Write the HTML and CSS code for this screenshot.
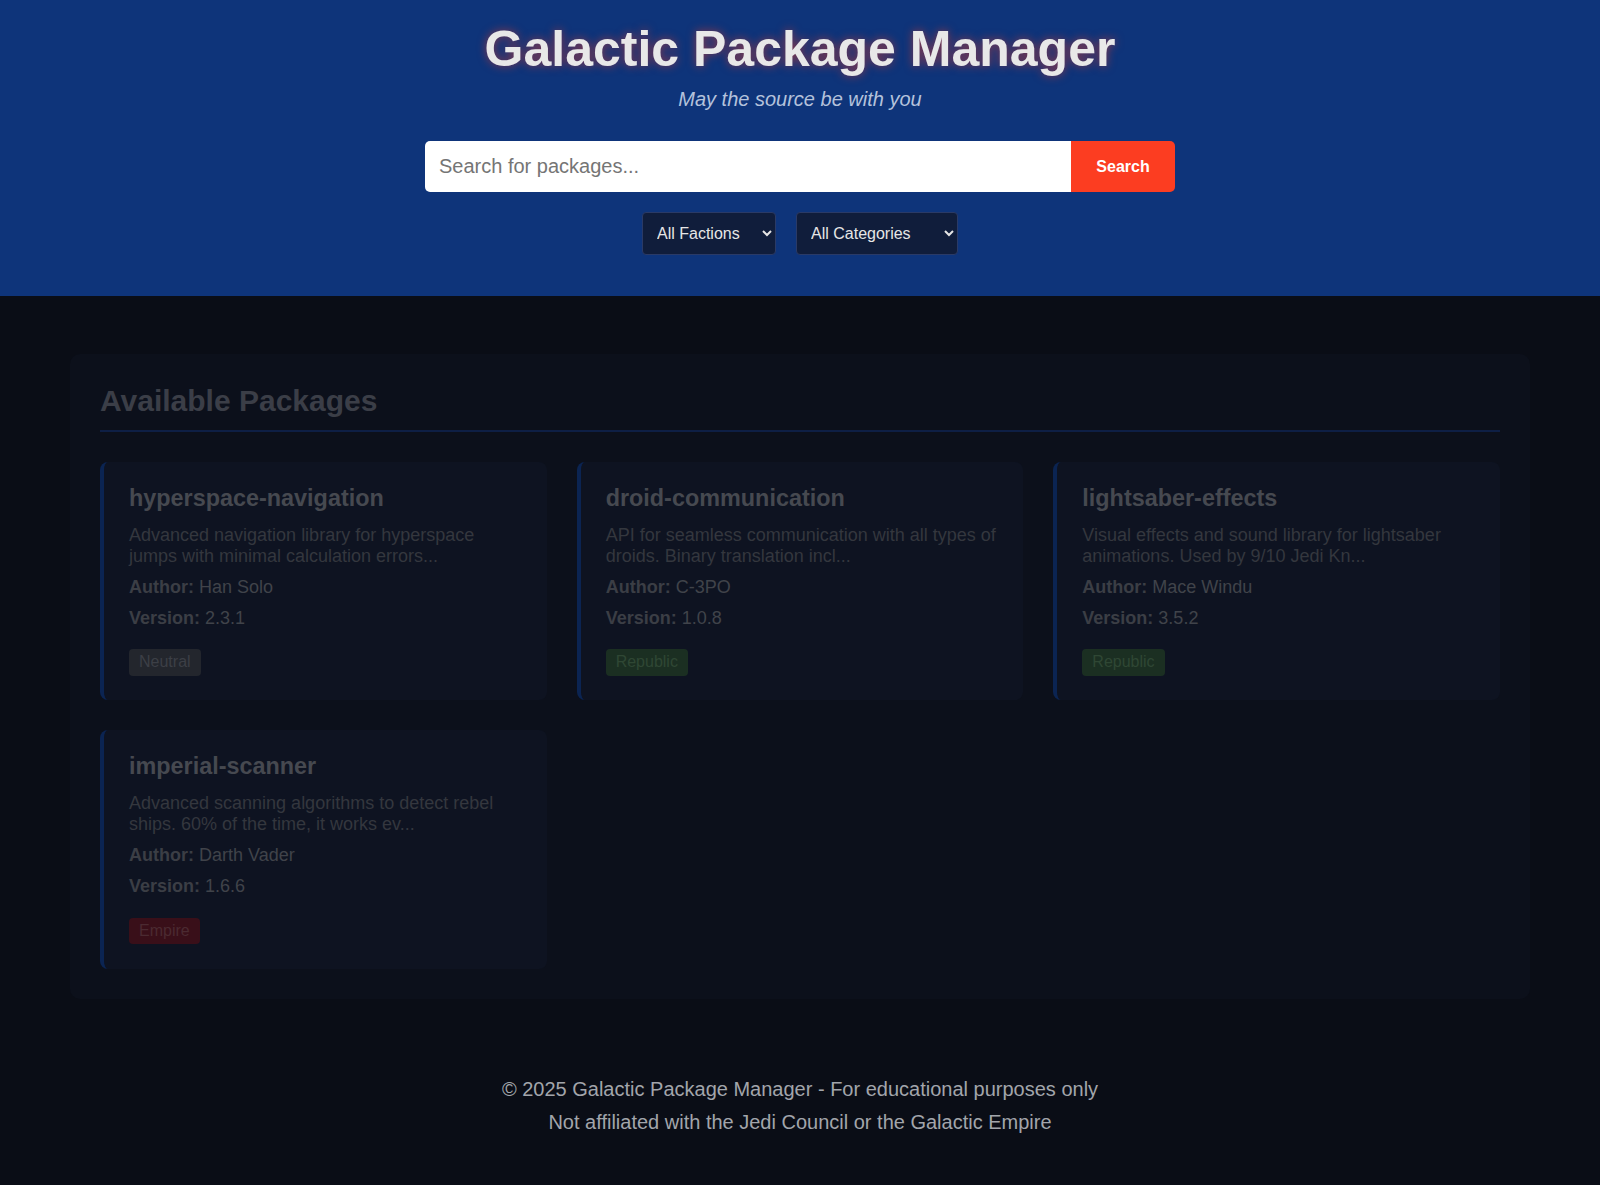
FILE: index.html
```html
<!DOCTYPE html>
<html lang="en">
<head>
<meta charset="utf-8">
<title>Galactic Package Manager</title>
<link rel="stylesheet" href="styles.css">
</head>
<body>
<header class="site-header">
  <h1 class="site-title">Galactic Package Manager</h1>
  <p class="tagline">May the source be with you</p>
  <form class="search-form">
    <input class="search-input" type="text" placeholder="Search for packages...">
    <button class="search-button" type="button">Search</button>
  </form>
  <div class="filters">
    <select class="filter filter-faction">
      <option>All Factions</option>
    </select>
    <select class="filter filter-category">
      <option>All Categories</option>
    </select>
  </div>
</header>

<main class="packages">
  <h2 class="section-title">Available Packages</h2>
  <div class="package-grid">
    <article class="card">
      <h3 class="card-title">hyperspace-navigation</h3>
      <p class="card-desc">Advanced navigation library for hyperspace jumps with minimal calculation errors...</p>
      <p class="card-meta"><strong>Author:</strong> Han Solo</p>
      <p class="card-meta"><strong>Version:</strong> 2.3.1</p>
      <div class="card-tags"><span class="badge badge-neutral">Neutral</span></div>
    </article>
    <article class="card">
      <h3 class="card-title">droid-communication</h3>
      <p class="card-desc">API for seamless communication with all types of droids. Binary translation incl...</p>
      <p class="card-meta"><strong>Author:</strong> C-3PO</p>
      <p class="card-meta"><strong>Version:</strong> 1.0.8</p>
      <div class="card-tags"><span class="badge badge-republic">Republic</span></div>
    </article>
    <article class="card">
      <h3 class="card-title">lightsaber-effects</h3>
      <p class="card-desc">Visual effects and sound library for lightsaber animations. Used by 9/10 Jedi Kn...</p>
      <p class="card-meta"><strong>Author:</strong> Mace Windu</p>
      <p class="card-meta"><strong>Version:</strong> 3.5.2</p>
      <div class="card-tags"><span class="badge badge-republic">Republic</span></div>
    </article>
    <article class="card">
      <h3 class="card-title">imperial-scanner</h3>
      <p class="card-desc">Advanced scanning algorithms to detect rebel ships. 60% of the time, it works ev...</p>
      <p class="card-meta"><strong>Author:</strong> Darth Vader</p>
      <p class="card-meta"><strong>Version:</strong> 1.6.6</p>
      <div class="card-tags"><span class="badge badge-empire">Empire</span></div>
    </article>
  </div>
</main>

<footer class="site-footer">
  <p>© 2025 Galactic Package Manager - For educational purposes only</p>
  <p>Not affiliated with the Jedi Council or the Galactic Empire</p>
</footer>
</body>
</html>
```

FILE: styles.css
```css
* { box-sizing: border-box; }

body {
  margin: 0;
  background: #0a0d16;
  color: #e6e6e6;
  font-family: "Liberation Sans", Arial, sans-serif;
  font-size: 18px;
}

.site-header {
  background: #0e347a;
  text-align: center;
  padding: 20px 20px 41px;
}

.site-title {
  margin: 0;
  font-size: 50px;
  font-weight: bold;
  line-height: normal;
  color: #e8e8e8;
  text-shadow: 0 0 10px rgba(252, 61, 33, 0.55);
}

.tagline {
  margin: 10px 0 0;
  font-size: 20px;
  font-style: italic;
  color: #b4c2dc;
}

.search-form {
  display: flex;
  width: 750px;
  margin: 30px auto 0;
  height: 51px;
}

.search-input {
  flex: 1;
  min-width: 0;
  height: 51px;
  border: none;
  border-radius: 5px 0 0 5px;
  padding: 0 14px;
  font-family: "Liberation Sans", Arial, sans-serif;
  font-size: 20px;
  color: #222;
  background: #fff;
  outline: none;
}

.search-input::placeholder { color: #757575; }

.search-button {
  width: 104px;
  height: 51px;
  border: none;
  border-radius: 0 5px 5px 0;
  background: #fc3d21;
  color: #fff;
  font-family: "Liberation Sans", Arial, sans-serif;
  font-size: 16px;
  font-weight: bold;
}

.filters {
  display: flex;
  justify-content: center;
  gap: 20px;
  margin-top: 20px;
}

.filter {
  height: 43px;
  padding: 0 6px 0 10px;
  background: #101d3b;
  color: #e6e6e6;
  border: 1px solid #2a3a66;
  border-radius: 4px;
  font-family: "Liberation Sans", Arial, sans-serif;
  font-size: 16px;
}

.filter-faction { width: 134px; }
.filter-category { width: 162px; }

.packages {
  max-width: 1460px;
  margin: 58px auto 0;
  padding: 30px;
  background: #0c101b;
  border-radius: 10px;
}

.section-title {
  margin: 0;
  padding-bottom: 12px;
  font-size: 30px;
  font-weight: bold;
  color: #3b3e47;
  border-bottom: 2px solid #0e1f45;
}

.package-grid {
  display: grid;
  grid-template-columns: repeat(3, 1fr);
  gap: 30px;
  margin-top: 30px;
}

.card {
  background: #0e1321;
  border-left: 4px solid #0b2452;
  border-radius: 8px;
  padding: 23px 25px 24.5px;
}

.card-title {
  margin: 0 0 12.5px;
  font-size: 23.4px;
  font-weight: bold;
  line-height: normal;
  color: #464950;
}

.card-desc {
  margin: 0 0 9.5px;
  line-height: 1.2;
  color: #34373e;
}

.card-meta {
  margin: 0 0 9px;
  line-height: 1.2;
  color: #40434a;
}

.card-meta strong { color: #3b3e45; }

.card-tags { margin-top: 20px; line-height: 1; }

.badge {
  display: inline-block;
  padding: 4px 10px;
  border-radius: 4px;
  font-size: 16px;
  line-height: 18.4px;
}

.badge-neutral { background: #23262d; color: #3c3f46; }
.badge-republic { background: #1b2f22; color: #2f4734; }
.badge-empire { background: #390f19; color: #4b2a31; }

.site-footer {
  text-align: center;
  padding: 79px 20px 40px;
  font-size: 20px;
  color: #a2a5ab;
}

.site-footer p { margin: 0; }
.site-footer p + p { margin-top: 10px; }
```
